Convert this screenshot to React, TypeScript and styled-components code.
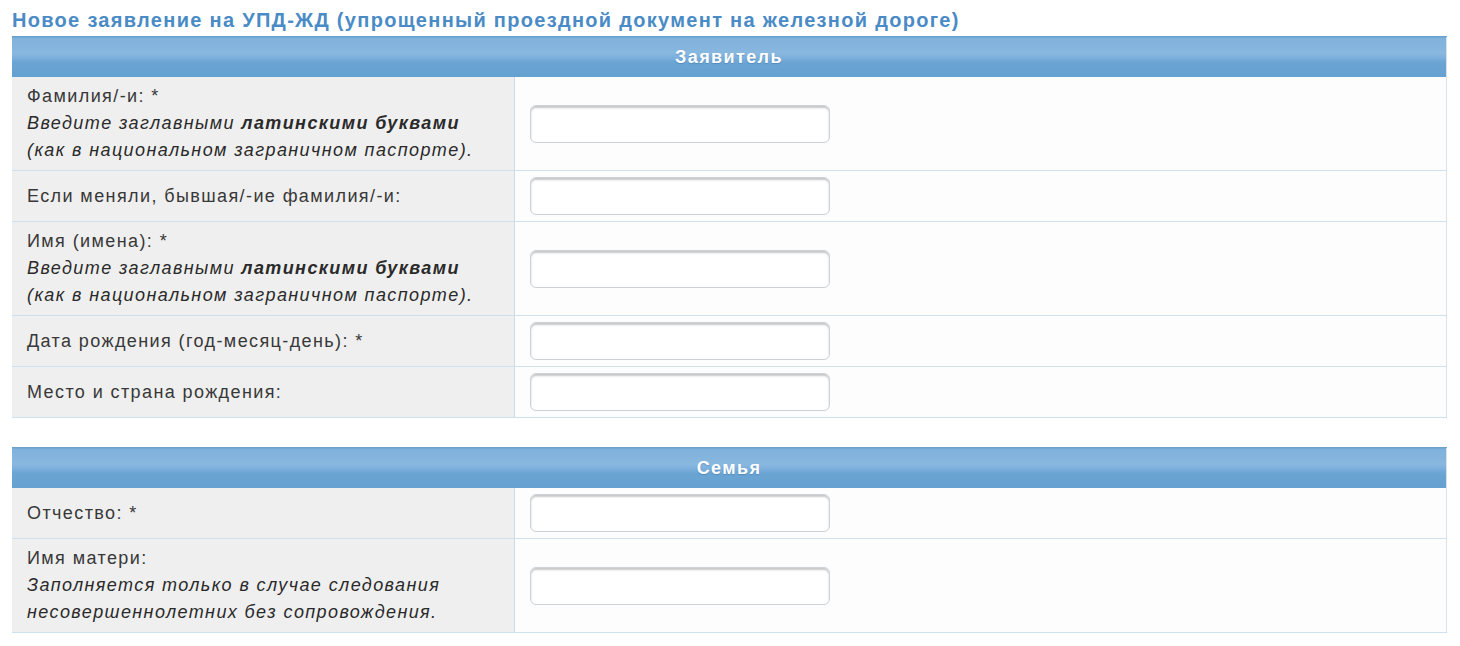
import React from "react";
import styled, { createGlobalStyle } from "styled-components";

const Global = createGlobalStyle`
  html, body { margin: 0; padding: 0; background: #ffffff; }
  body { font-family: "Liberation Sans", Arial, sans-serif; color: #333; }
`;

const Page = styled.div`
  padding: 7px 13px 0 12px;
`;

const Title = styled.h1`
  margin: 0 0 3px 0;
  font-size: 20px;
  line-height: 26px;
  letter-spacing: 1.3px;
  font-weight: bold;
  color: #4a8bc6;
  white-space: nowrap;
`;

const Table = styled.table<{ $gap?: number }>`
  width: 1435px;
  border-collapse: collapse;
  margin-bottom: ${(p) => p.$gap ?? 0}px;
  border-right: 1px solid #d6e2ec;
`;

const HeaderCell = styled.th`
  height: 40px;
  padding: 0;
  text-align: center;
  font-size: 18px;
  letter-spacing: 1.4px;
  font-weight: bold;
  color: #ffffff;
  text-shadow: 0 1px 1px rgba(40, 90, 140, 0.35);
  border-top: 1px solid #6aa0cc;
  background: linear-gradient(
    to bottom,
    #7fb1db 0%,
    #88b7df 40%,
    #7aaedb 52%,
    #6aa4d3 62%,
    #64a0d0 100%
  );
`;

const Row = styled.tr`
  border-bottom: 1px solid #cfe0ee;
`;

const LabelCell = styled.td`
  width: 502px;
  box-sizing: border-box;
  padding: 6px 15px;
  background: #efefef;
  border-right: 1px solid #c9dced;
  font-size: 18px;
  line-height: 27px;
  letter-spacing: 1.4px;
  color: #383838;
  vertical-align: middle;
  white-space: nowrap;
`;

const Hint = styled.span`
  display: block;
  font-style: italic;
  color: #2a2a2a;
`;

const Strong = styled.b`
  font-weight: bold;
`;

const FieldCell = styled.td`
  padding: 6px 15px;
  background: #fdfdfd;
  vertical-align: middle;
`;

const Input = styled.input`
  display: block;
  width: 300px;
  height: 38px;
  box-sizing: border-box;
  border: 1px solid #cdd2d6;
  border-radius: 6px;
  background: #ffffff;
  box-shadow: inset 0 2px 2px rgba(0, 0, 0, 0.22);
  font-size: 16px;
  padding: 0 8px;
  outline: none;
`;

type Field = { label: React.ReactNode; hint?: React.ReactNode };

const latinHint = (
  <>
    Введите заглавными <Strong>латинскими буквами</Strong>
    <br />
    (как в национальном заграничном паспорте).
  </>
);

const applicant: Field[] = [
  { label: "Фамилия/-и: *", hint: latinHint },
  { label: "Если меняли, бывшая/-ие фамилия/-и:" },
  { label: "Имя (имена): *", hint: latinHint },
  { label: "Дата рождения (год-месяц-день): *" },
  { label: "Место и страна рождения:" },
];

const family: Field[] = [
  { label: "Отчество: *" },
  {
    label: "Имя матери:",
    hint: (
      <>
        Заполняется только в случае следования
        <br />
        несовершеннолетних без сопровождения.
      </>
    ),
  },
];

const Section = ({ title, fields, gap }: { title: string; fields: Field[]; gap?: number }) => (
  <Table $gap={gap}>
    <thead>
      <tr>
        <HeaderCell colSpan={2}>{title}</HeaderCell>
      </tr>
    </thead>
    <tbody>
      {fields.map((f, i) => (
        <Row key={i}>
          <LabelCell>
            {f.label}
            {f.hint && <Hint>{f.hint}</Hint>}
          </LabelCell>
          <FieldCell>
            <Input type="text" />
          </FieldCell>
        </Row>
      ))}
    </tbody>
  </Table>
);

export default function App() {
  return (
    <>
      <Global />
      <Page>
        <Title>Новое заявление на УПД-ЖД (упрощенный проездной документ на железной дороге)</Title>
        <Section title="Заявитель" fields={applicant} gap={29} />
        <Section title="Семья" fields={family} />
      </Page>
    </>
  );
}
